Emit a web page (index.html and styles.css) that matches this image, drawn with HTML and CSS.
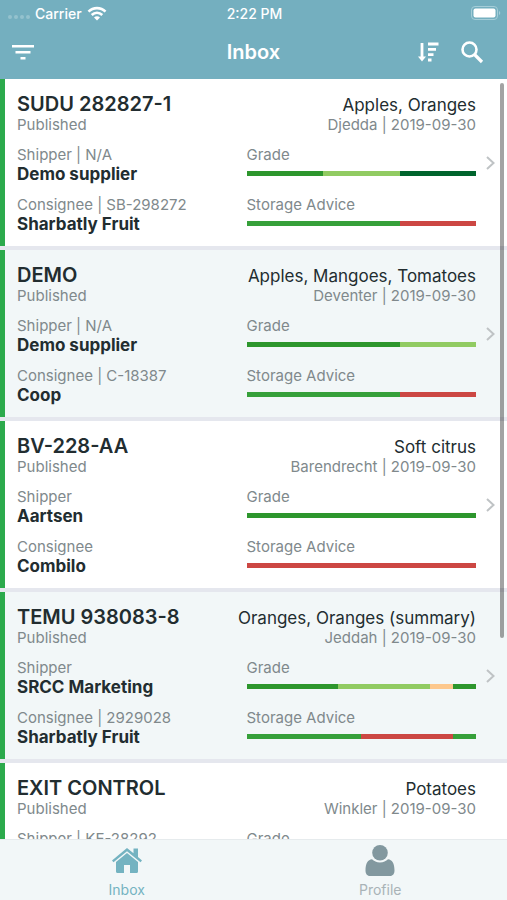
FILE: index.html
```html
<!DOCTYPE html>
<html lang="en">
<head>
<meta charset="utf-8">
<meta name="viewport" content="width=device-width, initial-scale=1">
<title>Inbox</title>
<link rel="stylesheet" href="styles.css">
</head>
<body>
<header class="top">
  <div class="status">
    <div class="carrier">
      <span class="signal"><i></i><i></i><i></i><i></i></span>
      <span>Carrier</span>
      <svg width="20" height="15" viewBox="0 0 20 15" fill="none" stroke="#fff" stroke-width="2.6"><path d="M1.5 5.6C6.2 .9 13.800 .9 18.500 5.600"/><path d="M4.700 9C7.800 6.100 12.200 6.100 15.300 9"/><path d="M10 14.500L7 11.400C8.700 9.900 11.300 9.900 13 11.400Z" fill="#fff" stroke="none"/></svg>
    </div>
    <span>2:22 PM</span>
    <div class="power">
      <svg width="30" height="14" viewBox="0 0 30 14"><rect x=".5" y=".5" width="26" height="13" rx="3.500" fill="none" stroke="#a5cdd8"/><rect x="2.500" y="2.500" width="22" height="9" rx="2" fill="#fff"/><path d="M28 5v4c1.700-.6 1.700-3.400 0-4Z" fill="#a5cdd8"/></svg>
    </div>
  </div>
  <div class="bar">
    <div class="side">
      <button type="button" aria-label="Filter"><svg width="24" height="24" viewBox="0 0 24 24" stroke="#fff" stroke-width="2.500"><path d="M1 6.200h22M4.500 12.200h15M9.500 18.200h5"/></svg></button>
    </div>
    <h1>Inbox</h1>
    <div class="side end">
      <button type="button" aria-label="Sort"><svg width="24" height="24" viewBox="0 0 24 24" fill="none" stroke="#fff" stroke-width="2.800"><path d="M6 3v15"/><path d="M2 16.500h8L6 21.500Z" fill="#fff" stroke="none"/><path d="M12 4h10.500M12 9.300h8M12 14.600h5.500M12 20h3.500"/></svg></button>
      <button type="button" aria-label="Search"><svg width="24" height="24" viewBox="0 0 24 24" fill="none" stroke="#fff" stroke-width="2.600"><circle cx="9.500" cy="9.500" r="7"/><path d="M14.500 14.500l7.500 7.500" stroke-width="3.200"/></svg></button>
    </div>
  </div>
</header>

<main class="scroll">
  <ul class="list">
    <li><a class="card" href="#sudu">
      <div class="body">
        <div class="head"><h2>SUDU 282827-1</h2><span class="goods">Apples, Oranges</span></div>
        <div class="head label"><span>Published</span><span>Djedda | 2019-09-30</span></div>
        <div class="pair">
          <div><div class="label">Shipper | N/A</div><div class="value">Demo supplier</div></div>
          <div><div class="label">Grade</div><div class="meter"><i class="good" style="flex-grow:1"></i><i class="fair" style="flex-grow:1"></i><i class="best" style="flex-grow:1"></i></div></div>
        </div>
        <div class="pair">
          <div><div class="label">Consignee | SB-298272</div><div class="value">Sharbatly Fruit</div></div>
          <div><div class="label">Storage Advice</div><div class="meter"><i class="keep" style="flex-grow:2"></i><i class="bad" style="flex-grow:1"></i></div></div>
        </div>
      </div>
      <svg class="chevron" width="9" height="14" viewBox="0 0 9 14"><path d="M1 1l6.500 6L1 13"/></svg>
    </a></li>
    <li><a class="card" href="#demo">
      <div class="body">
        <div class="head"><h2>DEMO</h2><span class="goods">Apples, Mangoes, Tomatoes</span></div>
        <div class="head label"><span>Published</span><span>Deventer | 2019-09-30</span></div>
        <div class="pair">
          <div><div class="label">Shipper | N/A</div><div class="value">Demo supplier</div></div>
          <div><div class="label">Grade</div><div class="meter"><i class="good" style="flex-grow:2"></i><i class="fair" style="flex-grow:1"></i></div></div>
        </div>
        <div class="pair">
          <div><div class="label">Consignee | C-18387</div><div class="value">Coop</div></div>
          <div><div class="label">Storage Advice</div><div class="meter"><i class="keep" style="flex-grow:2"></i><i class="bad" style="flex-grow:1"></i></div></div>
        </div>
      </div>
      <svg class="chevron" width="9" height="14" viewBox="0 0 9 14"><path d="M1 1l6.500 6L1 13"/></svg>
    </a></li>
    <li><a class="card" href="#bv">
      <div class="body">
        <div class="head"><h2>BV-228-AA</h2><span class="goods">Soft citrus</span></div>
        <div class="head label"><span>Published</span><span>Barendrecht | 2019-09-30</span></div>
        <div class="pair">
          <div><div class="label">Shipper</div><div class="value">Aartsen</div></div>
          <div><div class="label">Grade</div><div class="meter"><i class="good" style="flex-grow:1"></i></div></div>
        </div>
        <div class="pair">
          <div><div class="label">Consignee</div><div class="value">Combilo</div></div>
          <div><div class="label">Storage Advice</div><div class="meter"><i class="bad" style="flex-grow:1"></i></div></div>
        </div>
      </div>
      <svg class="chevron" width="9" height="14" viewBox="0 0 9 14"><path d="M1 1l6.500 6L1 13"/></svg>
    </a></li>
    <li><a class="card" href="#temu">
      <div class="body">
        <div class="head"><h2>TEMU 938083-8</h2><span class="goods">Oranges, Oranges (summary)</span></div>
        <div class="head label"><span>Published</span><span>Jeddah | 2019-09-30</span></div>
        <div class="pair">
          <div><div class="label">Shipper</div><div class="value">SRCC Marketing</div></div>
          <div><div class="label">Grade</div><div class="meter"><i class="good" style="flex-grow:4"></i><i class="fair" style="flex-grow:4"></i><i class="weak" style="flex-grow:1"></i><i class="good" style="flex-grow:1"></i></div></div>
        </div>
        <div class="pair">
          <div><div class="label">Consignee | 2929028</div><div class="value">Sharbatly Fruit</div></div>
          <div><div class="label">Storage Advice</div><div class="meter"><i class="keep" style="flex-grow:5"></i><i class="bad" style="flex-grow:4"></i><i class="keep" style="flex-grow:1"></i></div></div>
        </div>
      </div>
      <svg class="chevron" width="9" height="14" viewBox="0 0 9 14"><path d="M1 1l6.500 6L1 13"/></svg>
    </a></li>
    <li><a class="card" href="#exit">
      <div class="body">
        <div class="head"><h2>EXIT CONTROL</h2><span class="goods">Potatoes</span></div>
        <div class="head label"><span>Published</span><span>Winkler | 2019-09-30</span></div>
        <div class="pair">
          <div><div class="label">Shipper | KE-28292</div></div>
          <div><div class="label">Grade</div></div>
        </div>
      </div>
    </a></li>
  </ul>
  <div class="thumb"></div>
</main>

<nav class="tabs">
  <a class="tab active" href="#inbox">
    <svg width="32" height="32" viewBox="0 0 32 32" fill="currentColor"><path d="M16 3L1 15.500l1.500 1.800L16 6.200l13.500 11.100 1.500-1.800-4-3.400V3.500h-4.500v4.800Z"/><path d="M16 8L5 17v9.500c0 .8.500 1.500 1.500 1.500H13v-8h6v8h6.500c1 0 1.500-.7 1.500-1.500V17Z"/></svg>
    <span>Inbox</span>
  </a>
  <a class="tab" href="#profile">
    <svg width="32" height="32" viewBox="0 0 32 32" fill="#82989f"><circle cx="16" cy="7.800" r="7.800"/><path d="M8 14.300c-4 .4-6.500 4-6.500 11.200 0 3 1.500 5.500 4.500 5.500h20c3 0 4.500-2.500 4.500-5.500 0-7.200-2.500-10.800-6.500-11.200-2 2-4.500 3.200-8 3.200s-6-1.200-8-3.200Z"/></svg>
    <span>Profile</span>
  </a>
</nav>
</body>
</html>
```

FILE: styles.css
```css
* { box-sizing: border-box; }
body {
  margin: 0;
  height: 100vh;
  display: flex;
  flex-direction: column;
  overflow: hidden;
  font-family: Inter, "Liberation Sans", sans-serif;
  font-size: 14px;
  color: #222d30;
}
h1, h2 { margin: 0; font-weight: 600; }
a { color: inherit; text-decoration: none; }
svg { display: block; }

.top { background: #74afbf; color: #fff; padding-bottom: 5px; }
.status, .bar {
  display: grid;
  grid-template-columns: 1fr auto 1fr;
  align-items: center;
}
.status { height: 26px; padding: 0 6px 0 8px; font-weight: 500; }
.carrier { display: flex; align-items: center; gap: 5px; }
.signal { display: flex; gap: 2px; padding-top: 8px; }
.signal i { width: 4px; height: 4px; border-radius: 50%; background: #94c2ce; }
.power { display: flex; justify-content: flex-end; }
.bar { height: 48px; padding: 4px 11px 0; }
.bar h1 { font-size: 20px; line-height: 24px; }
.side { display: flex; gap: 20px; }
.end { justify-content: flex-end; padding-right: 12px; }
.bar button { padding: 0; border: 0; background: none; }

.scroll { flex: 1; min-height: 0; overflow: hidden; position: relative; background: #e5e7ee; }
.thumb {
  position: absolute;
  top: 4px;
  right: 3px;
  width: 4px;
  height: 73%;
  border-radius: 2px;
  background: rgba(0, 0, 0, .36);
}
.list { list-style: none; margin: 0; padding: 0; display: flex; flex-direction: column; gap: 4px; }
.card {
  display: flex;
  align-items: center;
  gap: 10px;
  padding: 13px 12px 12px;
  border-left: 5px solid #2caa4c;
  background: #fff;
}
li:nth-child(even) .card { background: #f2f7f8; }
li:last-child .card { padding-right: 31px; }
.body { flex: 1; min-width: 0; }
.head { display: flex; justify-content: space-between; align-items: center; }
.head h2 { font-size: 20px; line-height: 24px; }
.goods { font-size: 17px; line-height: 22px; padding-top: 2px; }
.label { font-size: 15px; line-height: 18px; color: #80898c; }
.pair { display: grid; grid-template-columns: 1fr 1fr; margin-top: 12px; }
.value { font-size: 17px; line-height: 20px; font-weight: 700; }
.meter { display: flex; padding: 7px 0 8px; }
.meter i { height: 5px; flex-basis: 0; }
.good { background: #2d962d; }
.keep { background: #36a03a; }
.fair { background: #91cb62; }
.best { background: #00642d; }
.weak { background: #fdc88d; }
.bad { background: #cc4743; }
.chevron { fill: none; stroke: #bfc3c5; stroke-width: 2; }

.tabs { display: flex; height: 61px; background: #f2f7f8; border-top: 1px solid #e6ebed; }
.tab {
  flex: 1;
  display: flex;
  flex-direction: column;
  align-items: center;
  gap: 4px;
  padding-top: 5px;
  line-height: 18px;
  color: #a9b3b7;
}
.active { color: #74b3c1; }
```
